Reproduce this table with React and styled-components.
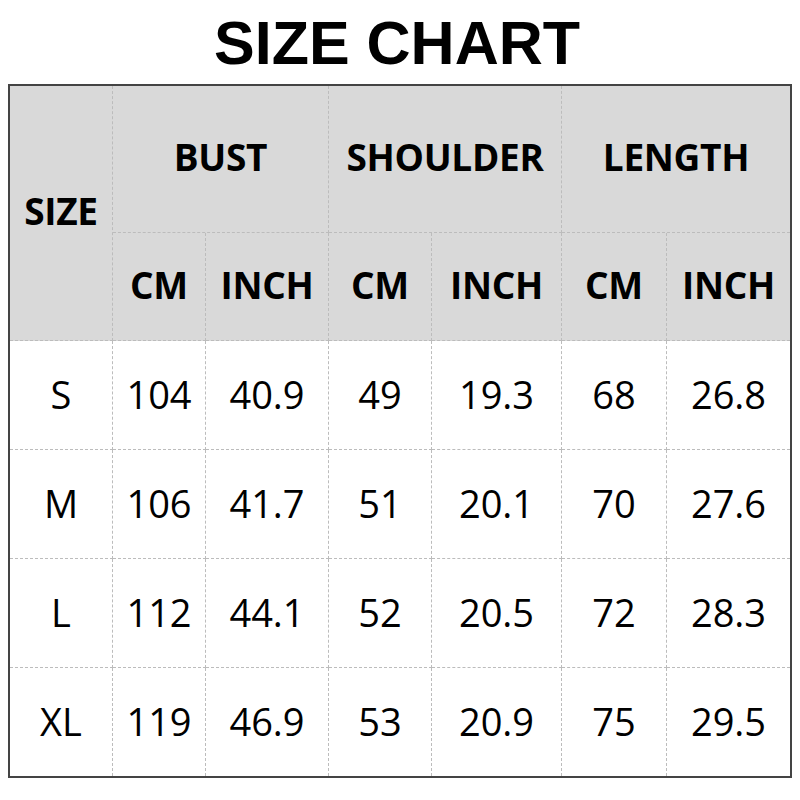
import React from "react";
import styled, { createGlobalStyle } from "styled-components";

const Global = createGlobalStyle`
  html, body { margin: 0; padding: 0; background: #fff; }
  * { box-sizing: border-box; }
`;

const Page = styled.div`
  width: 800px;
  height: 800px;
  padding: 0 8px;
  display: flex;
  flex-direction: column;
  align-items: stretch;
`;

const Title = styled.h1`
  margin: 13px 0 10px;
  font-family: "Liberation Sans", Arial, sans-serif;
  font-weight: 700;
  font-size: 61px;
  line-height: 61px;
  text-align: center;
  color: #000;
  padding-right: 6px;
`;

const Table = styled.div`
  display: grid;
  grid-template-columns: 103px 93px 123px 103px 130px 105px 1fr;
  grid-template-rows: 147px 108px 109px 109px 109px 108px;
  border: 2px solid #444;
  font-family: "Open Sans", "Noto Sans", sans-serif;
  color: #000;
`;

const Cell = styled.div`
  display: flex;
  align-items: center;
  justify-content: center;
  padding-bottom: ${(p) => (p.$head ? "5px" : "3px")};
  background: ${(p) => (p.$head ? "#d9d9d9" : "#fff")};
  font-weight: ${(p) => (p.$head ? 700 : 400)};
  font-size: ${(p) => (p.$head ? "37px" : "38px")};
  letter-spacing: ${(p) => (p.$head ? "-0.3px" : "0")};
  border-right: ${(p) => (p.$lastCol ? "none" : "1px dashed #bcbcbc")};
  border-bottom: ${(p) => (p.$lastRow ? "none" : "1px dashed #bcbcbc")};
  grid-column: ${(p) => (p.$colSpan ? `span ${p.$colSpan}` : "auto")};
  grid-row: ${(p) => (p.$rowSpan ? `span ${p.$rowSpan}` : "auto")};
  white-space: nowrap;
`;

const rows = [
  ["S", "104", "40.9", "49", "19.3", "68", "26.8"],
  ["M", "106", "41.7", "51", "20.1", "70", "27.6"],
  ["L", "112", "44.1", "52", "20.5", "72", "28.3"],
  ["XL", "119", "46.9", "53", "20.9", "75", "29.5"],
];

export default function App() {
  return (
    <Page>
      <Global />
      <Title>SIZE CHART</Title>
      <Table>
        <Cell $head $rowSpan={2}>SIZE</Cell>
        <Cell $head $colSpan={2}>BUST</Cell>
        <Cell $head $colSpan={2}>SHOULDER</Cell>
        <Cell $head $colSpan={2} $lastCol>LENGTH</Cell>
        {["CM", "INCH", "CM", "INCH", "CM", "INCH"].map((t, i) => (
          <Cell key={i} $head $lastCol={i === 5}>{t}</Cell>
        ))}
        {rows.map((r, ri) =>
          r.map((v, ci) => (
            <Cell
              key={`${ri}-${ci}`}
              $lastCol={ci === r.length - 1}
              $lastRow={ri === rows.length - 1}
            >
              {v}
            </Cell>
          ))
        )}
      </Table>
    </Page>
  );
}
